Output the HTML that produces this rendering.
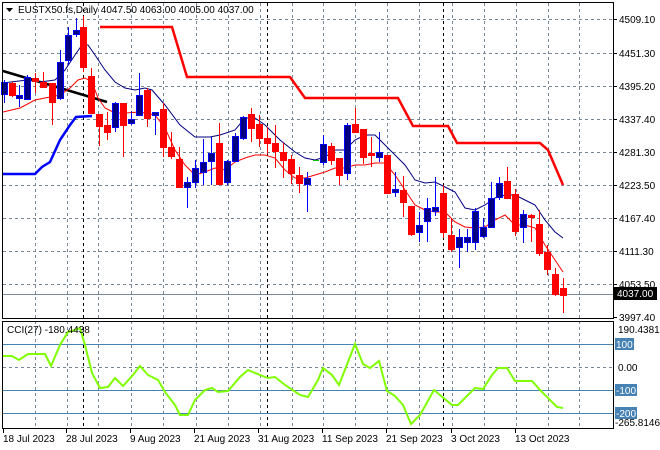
<!DOCTYPE html>
<html><head><meta charset="utf-8"><style>
html,body{margin:0;padding:0;background:#fff;}
svg{display:block;font-family:"Liberation Sans",sans-serif;font-size:10px;}
</style></head><body>
<svg id="s" width="660" height="450" xmlns="http://www.w3.org/2000/svg">
<rect width="660" height="450" fill="#fff"/>
<g id="grid" stroke="#778899" stroke-width="1" stroke-dasharray="3,3" shape-rendering="crispEdges"></g>
<g id="bd" stroke="#000" stroke-width="1" stroke-dasharray="3,3" shape-rendering="crispEdges">
<line x1="83.5" y1="3" x2="83.5" y2="428"/><line x1="267.5" y1="3" x2="267.5" y2="428"/><line x1="443.5" y1="3" x2="443.5" y2="428"/>
</g>
<line x1="3" y1="294.5" x2="613" y2="294.5" stroke="#778899" shape-rendering="crispEdges"/>
<g stroke="#4682b4" shape-rendering="crispEdges">
<line x1="3" y1="344.5" x2="613" y2="344.5"/><line x1="3" y1="390.5" x2="613" y2="390.5"/><line x1="3" y1="413.5" x2="613" y2="413.5"/>
</g>
<line x1="3" y1="367.5" x2="613" y2="367.5" stroke="#778899" stroke-dasharray="3,3" shape-rendering="crispEdges"/>
<polyline fill="none" stroke="#ff0000" stroke-width="2.5" points="100,27 172,27 187,77 290,77 305,98 398,98 413,126 448,126 457,143 540,143 548,150 563,185"/>
<polyline fill="none" stroke="#0000ff" stroke-width="2.5" points="3,174 35,174 42,167 50,162 60,140 70,125 76,117 92,116"/>
<line x1="3" y1="71" x2="107" y2="102" stroke="#000" stroke-width="2.5"/>
<polyline fill="none" stroke="#000080" stroke-width="1" points="3,83 27,80 40,82 55,80 65,70 75,55 82,45 88,45 95,55 105,70 115,82 125,88 135,90 145,88 152,90 165,105 180,125 195,137 210,137 220,135 235,130 245,118 255,118 265,125 280,140 295,152 305,158 315,160 325,157 335,150 345,150 355,140 365,135 375,135 385,145 395,155 405,165 415,180 425,183 435,182 445,187 455,192 465,208 475,210 485,205 495,198 505,195 515,195 525,200 535,205 545,220 555,232 563,238"/>
<polyline fill="none" stroke="#ff0000" stroke-width="1" points="3,112 20,108 35,100 50,97 60,95 70,88 78,80 85,78 92,82 98,98 105,108 115,113 125,113 140,112 155,115 165,128 175,150 185,165 195,175 205,172 215,168 225,170 235,162 245,158 255,155 265,155 275,158 285,170 295,178 305,178 315,175 325,172 335,168 345,168 355,165 365,165 375,163 385,163 395,175 405,190 415,205 425,210 435,212 445,212 455,222 465,227 475,228 485,227 495,220 505,215 515,225 525,225 535,228 545,245 555,260 563,272"/>
<g id="cd" shape-rendering="crispEdges"></g>
<polyline fill="none" stroke="#7fff00" stroke-width="2" points="3,356 12,356 19,360 28,354 45,354 51,366 60,345 68,332 75,330 80,328 85,345 92,373 100,388 108,387 115,378 123,386 133,375 140,366 148,375 158,380 165,392 175,405 180,415 188,415 195,400 205,390 212,388 218,392 228,391 240,377 248,370 260,375 268,378 275,377 285,385 300,395 308,397 318,380 323,368 332,375 339,385 355,344 363,364 370,368 379,361 387,391 395,396 403,405 411,424 420,415 434,390 452,405 458,405 475,388 483,389 492,375 498,368 507,368 515,381 532,381 540,390 557,407 563,408"/>
<g fill="none" stroke="#000" shape-rendering="crispEdges">
<rect x="2.5" y="2.5" width="611" height="316"/>
<rect x="2.5" y="321.5" width="611" height="107"/>
</g>
<g id="ax" fill="#000"></g>
<rect x="614" y="287" width="43" height="13" fill="#000"/>
<text x="617" y="297" fill="#fff">4037.00</text>
<rect x="615" y="338" width="19" height="12" fill="#4682b4"/><text x="616" y="348" fill="#fff">100</text>
<rect x="615" y="384" width="22" height="12" fill="#4682b4"/><text x="616" y="394" fill="#fff">-100</text>
<rect x="615" y="407" width="22" height="12" fill="#4682b4"/><text x="616" y="417" fill="#fff">-200</text>
<text x="618" y="333">190.4381</text>
<text x="618" y="371">0.00</text>
<text x="615" y="426">-265.8146</text>
<path d="M6 8 L13 8 L9.5 12 Z" fill="#000"/>
<text x="18" y="13">EUSTX50.fs,Daily  4047.50 4063.00 4005.00 4037.00</text>
<text x="7" y="333">CCI(27) -180.4438</text>
</svg>
<script>
var NS="http://www.w3.org/2000/svg";
function el(p,t,a){var e=document.createElementNS(NS,t);for(var k in a)e.setAttribute(k,a[k]);p.appendChild(e);return e;}
var g=document.getElementById('grid');
[35,67,98,131,163,196,228,260,292,323,355,387,419,452,484,516,548,579].forEach(function(x){el(g,'line',{x1:x+.5,y1:3,x2:x+.5,y2:428});});
[19,53,86,119,152,185,218,251,284].forEach(function(y){el(g,'line',{x1:3,y1:y+.5,x2:613,y2:y+.5});});
var ax=document.getElementById('ax');
[["4509.10",19],["4451.30",53],["4395.20",86],["4337.40",119],["4281.30",152],["4223.50",185],["4167.40",218],["4111.30",251],["4053.50",284],["3997.40",317]].forEach(function(a){
el(ax,'line',{x1:613,y1:a[1]+.5,x2:617,y2:a[1]+.5,stroke:'#000'});
var t=el(ax,'text',{x:619,y:a[1]+4});t.textContent=a[0];});
[["18 Jul 2023",3],["28 Jul 2023",66],["9 Aug 2023",130],["21 Aug 2023",194],["31 Aug 2023",258],["11 Sep 2023",322],["21 Sep 2023",386],["3 Oct 2023",451],["13 Oct 2023",515]].forEach(function(a){
el(ax,'line',{x1:a[1]+.5,y1:428,x2:a[1]+.5,y2:433,stroke:'#000'});
var t=el(ax,'text',{x:a[1],y:442});t.textContent=a[0];});
var C=[[4,82,94,80,103,1],[12,83,95,82,97,0],[19,95,98,85,107,1],[27,77,99,75,100,1],[35,78,81,73,93,0],[43,82,87,72,88,0],[52,83,102,83,125,0],[60,62,98,50,100,1],[68,35,60,27,65,1],[76,30,34,18,37,1],[83,27,67,16,72,0],[91,76,113,68,113,0],[99,114,126,114,146,0],[107,125,132,112,140,0],[115,103,127,102,132,1],[123,103,125,103,157,0],[131,119,123,111,125,1],[139,95,115,73,115,1],[147,90,118,88,127,0],[155,112,115,112,135,1],[163,109,147,103,157,0],[171,147,156,132,159,0],[179,159,187,147,188,0],[187,182,187,177,208,1],[195,168,182,160,188,1],[203,162,172,139,185,1],[211,153,161,137,185,1],[219,143,184,123,185,0],[227,161,182,160,185,1],[235,136,161,133,162,1],[243,117,138,116,140,1],[251,114,128,108,142,0],[259,124,138,115,147,0],[267,138,143,127,154,0],[275,143,151,125,168,0],[283,152,160,143,178,0],[291,159,173,155,184,0],[299,175,183,167,193,0],[307,178,184,172,212,1],[315,160,161,160,161,2],[323,144,162,135,165,1],[331,146,160,143,165,0],[339,158,175,158,185,0],[347,125,173,123,180,1],[355,124,132,108,132,0],[363,129,157,129,164,0],[371,153,155,137,167,0],[379,152,157,132,162,1],[387,155,193,155,193,0],[395,189,192,172,197,1],[403,190,202,176,217,0],[411,206,234,206,236,0],[419,225,232,212,242,1],[427,208,221,198,242,1],[435,207,211,177,216,1],[443,193,232,185,238,0],[451,235,249,218,252,0],[459,237,247,229,268,1],[467,237,242,229,252,1],[475,211,242,208,250,1],[483,227,236,218,238,1],[491,198,227,182,227,1],[499,183,197,177,200,1],[507,181,198,167,198,0],[515,194,231,189,236,0],[523,214,227,210,243,1],[531,215,217,214,242,0],[539,224,253,210,256,0],[547,252,269,245,275,0],[555,274,294,268,296,0],[563,288,295,278,313,0]];
var cd=document.getElementById('cd');
C.forEach(function(c){
var col=c[5]==1?'#0000ff':(c[5]==2?'#00c000':'#ff0000');
var fill=c[5]==1?'#000080':col;
el(cd,'line',{x1:c[0]+.5,y1:c[3],x2:c[0]+.5,y2:c[4],stroke:col});
if(c[5]==2){el(cd,'rect',{x:c[0]-2,y:c[1],width:6,height:1,fill:col});return;}
el(cd,'rect',{x:c[0]-2.5,y:c[1]+.5,width:6,height:Math.max(1,c[2]-c[1]),fill:fill,stroke:col,'stroke-width':1});
});
</script>
</body></html>
